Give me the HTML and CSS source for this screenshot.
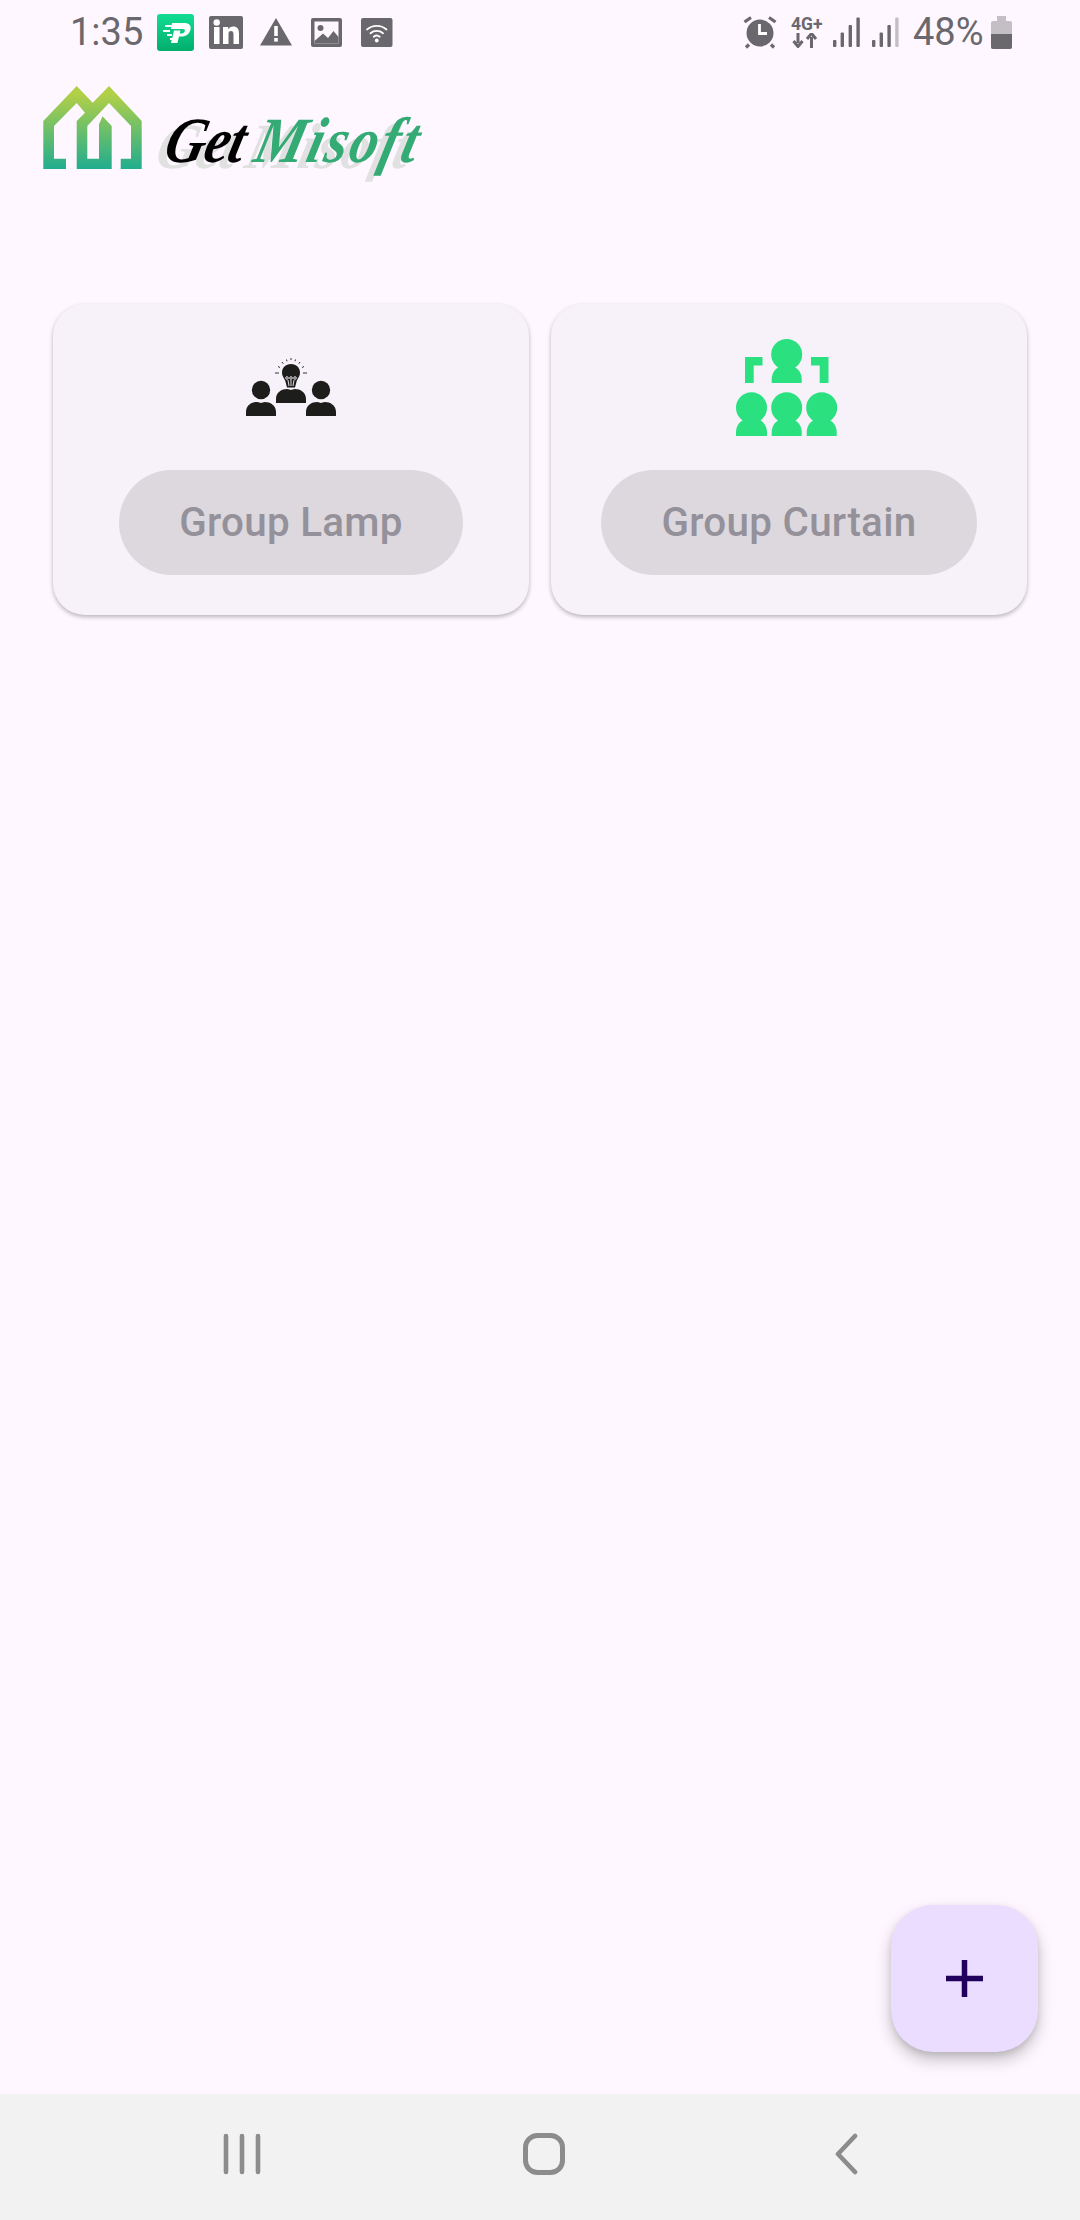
FILE: index.html
```html
<!DOCTYPE html>
<html lang="en">
<head>
<meta charset="utf-8">
<title>Get Misoft</title>
<link rel="stylesheet" href="styles.css">
</head>
<body>
<div class="screen">
  <div class="status">
    <div class="status-left">
      <span class="clock">1:35</span>
      <svg class="si" viewBox="0 0 37 37"><defs><linearGradient id="pg" x1="0" y1="0" x2="0" y2="1"><stop offset="0" stop-color="#12dd92"/><stop offset="1" stop-color="#02ae6c"/></linearGradient></defs><rect width="37" height="37" rx="3" fill="url(#pg)"/><path d="M15 9h12c5 0 7.500 2.500 6.500 6.500-1 4.500-4.500 7-9 7h-2.500l-1.600 6.500h-6.400l3-12.500h6.500l-.8 3h1.800c1.800 0 3-1 3.300-2.500.3-1.300-.5-2-2-2H14z" fill="#fff"/><path d="M8 12h7M6 17h7M10 21h5M13 25h3" stroke="#fff" stroke-width="2.200" fill="none"/></svg>
      <svg class="si" viewBox="0 0 37 37"><rect x="1" y="2" width="34" height="33" rx="2" fill="#6a686c"/><rect x="6" y="13" width="5.500" height="17" fill="#fff"/><circle cx="8.700" cy="8.500" r="3.200" fill="#fff"/><path d="M15 13h5.200v2.400c1-1.700 2.800-2.900 5-2.900 4 0 5.800 2.500 5.800 6.700V30h-5.500v-9.800c0-2.100-.8-3.300-2.600-3.300-1.900 0-2.400 1.400-2.400 3.300V30H15z" fill="#fff"/></svg>
      <svg class="si" viewBox="0 0 37 37"><path d="M17 4 33 31.500H1z" fill="#6a686c"/><rect x="15.200" y="12" width="3.600" height="10" fill="#fff"/><rect x="15.200" y="24" width="3.600" height="3.600" fill="#fff"/></svg>
      <svg class="si" viewBox="0 0 37 37"><rect x="1" y="4" width="31" height="29" rx="2" fill="#6a686c"/><rect x="4.500" y="7.500" width="24" height="22" fill="#fef7ff"/><circle cx="10.500" cy="14" r="3" fill="#6a686c"/><path d="M4.500 27 13 19.500l5 4.500 5.500-7 5 6v6.500h-24z" fill="#6a686c"/></svg>
      <svg class="si" viewBox="0 0 37 37"><rect x="0" y="4" width="31.500" height="29" rx="2" fill="#6a686c"/><g fill="none" stroke="#fff" stroke-width="1.800" stroke-linecap="round"><path d="M6 15.500c5.500-4.800 14-4.800 19.500 0"/><path d="M9.500 19.200c3.500-3 9-3 12.500 0"/><path d="M12.800 22.700c1.700-1.400 4.300-1.400 5.900 0"/></g><circle cx="15.750" cy="26.500" r="1.900" fill="#fff"/></svg>
    </div>
    <div class="status-right">
      <svg class="alarm" viewBox="0 0 34 36"><circle cx="17" cy="19" r="13.500" fill="#6a686c"/><path d="M1.500 8 8 3.500M32.500 8 26 3.500M6 30.500l-3 3M28 30.500l3 3" stroke="#6a686c" stroke-width="3.200" fill="none"/><path d="M16.500 10v9.500h7.500" stroke="#fff" stroke-width="2.800" fill="none"/></svg>
      <div class="net">
        <span class="net-label">4G+</span>
        <svg class="net-arrows" viewBox="0 0 31 15"><path d="M7 0v10M2.500 8 7 13.500 11.500 8" stroke="#6a686c" stroke-width="3" fill="none"/><path d="M20.500 15V4M16 6l4.500-5.500L25 6" stroke="#6a686c" stroke-width="3" fill="none"/></svg>
      </div>
      <svg class="signal" viewBox="0 0 27 30"><rect y="23" width="3.400" height="7" rx="1" fill="#6a686c"/><rect x="7.600" y="15.500" width="3.400" height="14.500" rx="1" fill="#6a686c"/><rect x="15.600" y="8" width="3.400" height="22" rx="1" fill="#6a686c"/><rect x="23.400" y="0.500" width="3.400" height="29.500" rx="1" fill="#6a686c"/></svg>
      <svg class="signal signal-b" viewBox="0 0 27 30"><rect y="23" width="3.400" height="7" rx="1" fill="#6a686c"/><rect x="7.600" y="15.500" width="3.400" height="14.500" rx="1" fill="#6a686c"/><rect x="15.400" y="8" width="3.400" height="22" rx="1" fill="#6a686c"/><rect x="23.200" y="0.500" width="3.400" height="29.500" rx="1" fill="#c3bfc4"/></svg>
      <span class="pct">48%</span>
      <svg class="batt" viewBox="0 0 21 33"><path d="M6 0h9v5H6z" fill="#c3bfc4"/><rect y="5" width="21" height="28" rx="2" fill="#c3bfc4"/><path d="M0 18h21v13a2 2 0 0 1-2 2H2a2 2 0 0 1-2-2z" fill="#6a686c"/></svg>
    </div>
  </div>

  <header class="brand">
    <svg class="house" viewBox="42 84 101 85">
      <defs><linearGradient id="hg" x1="0" y1="0" x2="0" y2="1"><stop offset="0.1" stop-color="#b2cf48"/><stop offset="1" stop-color="#21ad8e"/></linearGradient></defs>
      <path id="hp" fill="url(#hg)" d="M66 168H43.300V120L76.700 85 92.700 101.700 109 85l32.700 35v48h-21v-10.300H131V125l-22-23-21.700 23v32.700H99V123.300l3.500-8 9.200 9.700V168H76.700V120L85 111.700 76.700 102 54 125v32.700h12z"/>
    </svg>
    <div class="wordmark"><span class="w-get">Get</span><span class="w-mis">Misoft</span></div>
  </header>

  <main class="cards">
    <article class="card">
      <div class="card-icon">
        <svg class="icon-lamp" viewBox="0 0 90 58">
          <g fill="#1d1d1b">
            <circle cx="15" cy="32" r="9.200"/>
            <path id="b1" d="M0 58v-4c0-7 6-10 11-10 2 0 3 1 4 1s2-1 4-1c5 0 11 3 11 10v4z"/>
            <circle cx="75" cy="32" r="9.200"/>
            <path d="M60 58v-4c0-7 6-10 11-10 2 0 3 1 4 1s2-1 4-1c5 0 11 3 11 10v4z"/>
            <path d="M30 45v-4c0-7 6-10 11-10 2 0 3 1 4 1s2-1 4-1c5 0 11 3 11 10v4z"/>
            <path d="M45 6c5.500 0 9 3.800 9 8.500 0 4-2.500 6-3.300 8.500L49 29.500h-8L39.300 23c-.8-2.500-3.300-4.500-3.300-8.500C36 9.800 39.500 6 45 6z"/>
          </g>
          <g fill="none" stroke="#f7f2fa" stroke-width="0.900"><circle cx="41" cy="20" r="1.300"/><circle cx="45" cy="20" r="1.300"/><circle cx="49" cy="20" r="1.300"/><path d="M42 22l1 6M45 22v6M48 22l-1 6"/></g>
          <g stroke="#1d1d1b" stroke-width="0.900" fill="none"><path d="M29 15h4M57 15h4M32 8.500l2 1M56 9.500l2-1M36 4l1.200 1.800M52.800 5.800 54 4M40.500 1.500l.5 1.800M49 3.300l.5-1.800M45 0v2"/></g>
        </svg>
      </div>
      <button class="pill" type="button" disabled>Group Lamp</button>
    </article>
    <article class="card">
      <div class="card-icon">
        <svg class="icon-curtain" viewBox="0 0 106 97">
          <g fill="#2ae07f">
            <path d="M9 44V18h17.500v8.500H17.700V44zM75 18h17.500v26h-8.800V26.500H75z"/>
            <circle cx="50.700" cy="15.500" r="15.500"/>
            <path d="M35.700 44v-4c0-7 5-12 10-13h10c5 1 10 6 10 13v4z"/>
            <circle cx="15.500" cy="68.700" r="15.500"/>
            <path d="M0 97v-4c0-7 5-12 10-13h11c5 1 10 6 10 13v4z"/>
            <circle cx="50.700" cy="68.700" r="15.500"/>
            <path d="M35.700 97v-4c0-7 5-12 10-13h10c5 1 10 6 10 13v4z"/>
            <circle cx="85.700" cy="68.700" r="15.500"/>
            <path d="M70.700 97v-4c0-7 5-12 10-13h10c5 1 10 6 10 13v4z"/>
          </g>
        </svg>
      </div>
      <button class="pill" type="button" disabled>Group Curtain</button>
    </article>
  </main>

  <button class="fab" type="button" aria-label="Add"><svg class="fab-plus" viewBox="0 0 37 37"><path d="M15.750 0h5.500v15.750H37v5.500H21.250V37h-5.500V21.250H0v-5.500h15.750z" fill="#21005d"/></svg></button>

  <nav class="navbar">
    <div class="nav-item"><svg class="nav-recents" viewBox="0 0 38 42"><path d="M3 3v36M19 3v36M35 3v36" stroke="#8c8c8c" stroke-width="4.600" stroke-linecap="round" fill="none"/></svg></div>
    <div class="nav-item"><svg class="nav-home" viewBox="0 0 42 42"><rect x="2.500" y="2.500" width="37" height="37" rx="12" stroke="#8c8c8c" stroke-width="5" fill="none"/></svg></div>
    <div class="nav-item"><svg class="nav-back" viewBox="0 0 24 42"><path d="M21 3 4 21l17 18" stroke="#8c8c8c" stroke-width="4.600" stroke-linecap="round" stroke-linejoin="round" fill="none"/></svg></div>
  </nav>
</div>
</body>
</html>
```
FILE: styles.css
```css
* { box-sizing: border-box; }
html, body { margin: 0; padding: 0; }
body { background: #fef7ff; font-family: Roboto, "Liberation Sans", sans-serif; }

.screen {
  position: relative;
  width: 1080px;
  height: 2220px;
  display: flex;
  flex-direction: column;
  background: #fef7ff;
  overflow: hidden;
}

/* status bar */
.status {
  height: 64px;
  flex: none;
  padding: 0 68px 0 70px;
  display: flex;
  align-items: center;
  justify-content: space-between;
  color: #6a686c;
}
.status-left { display: flex; align-items: center; gap: 14px; }
.status-right { display: flex; align-items: center; }
.clock, .pct { font-size: 38px; line-height: 40px; font-weight: 400; }
.si { width: 37px; height: 37px; display: block; }
.alarm { width: 34px; height: 36px; display: block; margin-right: 14px; }
.net { width: 31px; margin-right: 11px; display: flex; flex-direction: column; align-items: flex-start; }
.net-label { font-size: 17.500px; font-weight: 700; line-height: 17px; white-space: nowrap; }
.net-arrows { width: 31px; height: 15px; display: block; }
.signal { width: 27px; height: 30px; display: block; margin-right: 12px; }
.signal-b { margin-right: 14px; }
.pct { margin-right: 6px; width: 72px; white-space: nowrap; }
.batt { width: 21px; height: 33px; display: block; }

/* brand */
.brand {
  flex: none;
  height: 116px;
  padding: 21px 0 0 42px;
  display: flex;
  align-items: flex-start;
}
.house { width: 101px; height: 85px; display: block; flex: none; }
.wordmark {
  margin: 28px 0 0 15px;
  font-family: "Liberation Serif", serif;
  font-style: italic;
  font-weight: 700;
  font-size: 56px;
  line-height: 64px;
  white-space: nowrap;
  transform: skewX(-14deg) scaleY(1.15);
  transform-origin: 0 100%;
  text-shadow: -7px 5px 0 #e1e1e1;
}
.w-get { color: #000; letter-spacing: -1px; }
.w-mis { color: #34ab74; letter-spacing: 2.500px; margin-left: 12px; }

/* cards */
.cards {
  flex: 1;
  margin-top: 124px;
  padding: 0 53px;
  display: grid;
  grid-template-columns: 476px 476px;
  column-gap: 22px;
  align-items: start;
}
.card {
  height: 311px;
  background: #f7f2fa;
  border-radius: 32px;
  box-shadow: 0 2px 4px rgba(0, 0, 0, .28);
  display: flex;
  flex-direction: column;
  align-items: center;
}
.card-icon {
  height: 166px;
  flex: none;
  display: flex;
  align-items: center;
  justify-content: center;
}
.icon-lamp { width: 90px; height: 58px; display: block; }
.icon-curtain { width: 106px; height: 97px; display: block; }
.pill {
  height: 105px;
  padding: 0 60.500px;
  border: 0;
  border-radius: 53px;
  background: #ddd8de;
  color: #94919a;
  font-family: Roboto, sans-serif;
  font-size: 40.400px;
  font-weight: 500;
  letter-spacing: .26px;
  white-space: nowrap;
}

/* floating action button */
.fab {
  position: absolute;
  right: 42px;
  bottom: 168px;
  width: 147px;
  height: 147px;
  padding: 0;
  border: 0;
  border-radius: 42px;
  background: #eaddff;
  box-shadow: 0 8px 16px rgba(0, 0, 0, .22), 0 3px 6px rgba(0, 0, 0, .1);
  display: flex;
  align-items: center;
  justify-content: center;
}
.fab-plus { width: 37px; height: 37px; display: block; }

/* navigation bar */
.navbar {
  flex: none;
  height: 126px;
  padding: 0 0 7px 8px;
  background: #f2f2f2;
  display: flex;
  justify-content: center;
  align-items: center;
}
.nav-item { width: 302px; display: flex; justify-content: center; }
.nav-recents { width: 38px; height: 42px; display: block; }
.nav-home { width: 42px; height: 42px; display: block; }
.nav-back { width: 24px; height: 42px; display: block; }
```
